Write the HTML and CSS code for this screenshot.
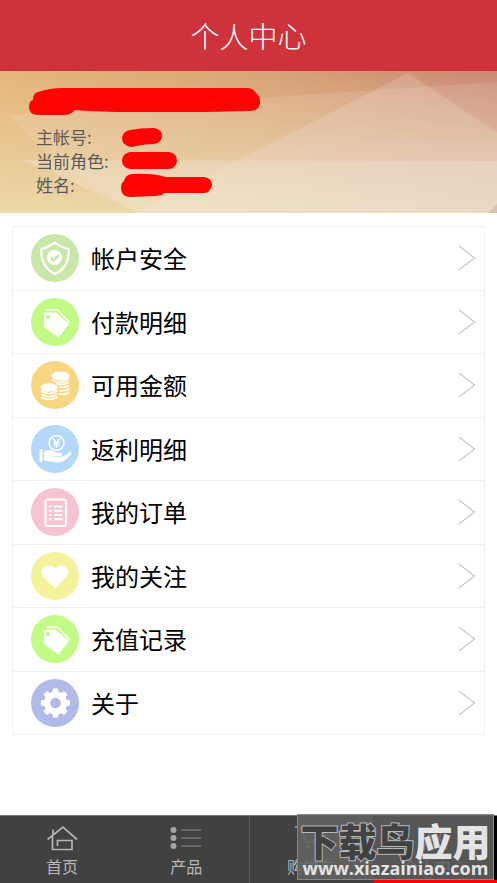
FILE: index.html
```html
<!DOCTYPE html>
<html lang="zh-CN">
<head>
<meta charset="utf-8">
<meta name="viewport" content="width=device-width, initial-scale=1">
<title>个人中心</title>
<link rel="stylesheet" href="styles.css">
</head>
<body>
<svg class="defs" aria-hidden="true">
  <symbol id="tag" viewBox="0 0 48 48">
    <path d="M14 14.500h9.500Q25 14.500 26 15.500L38 26 27.500 39.500 13 29V15.500Q13 14.500 14 14.500zM17 16.800a2.100 2.100 0 1 0 .1 0z" fill="#fff" fill-rule="evenodd"/>
    <path d="M15 12h11.500L38.500 24.500" fill="none" stroke="#fff" stroke-width="1.400"/>
  </symbol>
  <symbol id="arrow" viewBox="0 0 18 26"><path d="M1 1l15.500 12L1 25" fill="none" stroke="#c8c8c8" stroke-width="1.200"/></symbol>
</svg>
<header class="header"><h1>个人中心</h1></header>
<main class="main">
  <section class="banner">
    <svg class="facets" viewBox="0 0 497 142" preserveAspectRatio="none" aria-hidden="true">
      <defs>
        <linearGradient id="base" x1="0" y1="0" x2="1" y2="0"><stop offset="0" stop-color="#e6b57b"/><stop offset=".5" stop-color="#d9a476"/><stop offset="1" stop-color="#c98873"/></linearGradient>
        <linearGradient id="glow" x1="0" y1="0" x2="0" y2="1"><stop offset="0" stop-color="#ecdcac" stop-opacity="0"/><stop offset="1" stop-color="#ecdcac" stop-opacity=".9"/></linearGradient>
        <linearGradient id="side" x1="0" y1="0" x2="1" y2="0"><stop offset=".4" stop-color="#d9b5aa" stop-opacity="0"/><stop offset="1" stop-color="#d9b5aa" stop-opacity=".8"/></linearGradient>
      </defs>
      <path fill="url(#base)" d="M0 0h497v142H0z"/>
      <path fill="url(#glow)" d="M0 0h497v142H0z"/>
      <path fill="url(#side)" d="M0 70h497v72H0z" opacity=".5"/>
      <g fill="#f5ece6">
        <path d="M7 44L497 11v131H138L52 87z" opacity=".14"/>
        <path d="M408 2L135 142h362V61z" opacity=".2"/>
        <path d="M20 89l477 1v52H138L52 101z" opacity=".27"/>
      </g>
      <path d="M497 133l-9 9h9z" fill="#dbc1b2"/>
    </svg>
    <svg class="marks" viewBox="0 0 260 142" aria-hidden="true" fill="#ff0404">
      <path d="M38 21Q50 17 62 17H247Q253 17 256 22Q261 26 260 33Q258 40 250 40L205 41H135Q100 41 75 39Q71 44 64 44H37Q29 43 29 36Q29 30 33 29Q33 22 38 21z"/>
      <path d="M130 59Q140 57 154 57Q162 58 162 65Q161 73 153 73Q144 73 132 76Q122 75 122 67Q123 60 130 59z"/>
      <path d="M130 81H169Q177 82 177 90Q176 97 169 98H130Q122 97 122 89Q123 82 130 81z"/>
      <path d="M132 103Q152 102 166 106H204Q212 107 212 114Q211 121 204 122H165Q161 125 156 125L131 126Q121 126 121 117Q121 112 124 110Q125 104 132 103z"/>
    </svg>
    <dl class="info">
      <dt>主帐号:</dt>
      <dt>当前角色:</dt>
      <dt>姓名:</dt>
    </dl>
  </section>
  <nav class="list" aria-label="个人中心菜单">
    <a href="#"><svg class="icon" viewBox="0 0 48 48"><circle cx="24" cy="24" r="24" fill="#cae7aa"/><path d="M24 8.500q6 5 13.500 6.500C38.500 27 34 35 24 40 14 35 9.500 27 10.500 15 18 13.500 19 11 24 8.500z" fill="none" stroke="#fff" stroke-width="2.200"/><circle cx="23.500" cy="23.500" r="7.500" fill="#fff"/><path d="M19.500 23.500l3 3 5.500-5.500" fill="none" stroke="#cae7aa" stroke-width="2.500"/></svg><span>帐户安全</span><svg class="arrow"><use href="#arrow"/></svg></a>
    <a href="#"><svg class="icon" viewBox="0 0 48 48"><circle cx="24" cy="24" r="24" fill="#c1fa84"/><use href="#tag"/></svg><span>付款明细</span><svg class="arrow"><use href="#arrow"/></svg></a>
    <a href="#"><svg class="icon" viewBox="0 0 48 48"><circle cx="24" cy="24" r="24" fill="#f8d783"/><g fill="#fff"><ellipse cx="29.500" cy="15" rx="9" ry="4.500"/><ellipse cx="18" cy="26.500" rx="8.500" ry="4.200"/></g><g fill="none" stroke="#fff" stroke-width="1.600"><path d="M21 18.500q8 6.500 17-1M25 22.500q7 2.500 13-1.500M28 26q6 1 10-1.500M28 29.500q6 1 10-1.500M28 33q6 1 10-1.500M10 29.500q8 6 16.500 0M10 32.800q8 6 16.500 0M10 36q8 5 16.500 0"/></g></svg><span>可用金额</span><svg class="arrow"><use href="#arrow"/></svg></a>
    <a href="#"><svg class="icon" viewBox="0 0 48 48"><circle cx="24" cy="24" r="24" fill="#b3d8f8"/><path d="M8.500 24.500h3V37h-3zM13 26.500q7-3 12 1h5q3 2 0 3.500h-8q10 3 17-4.500 2.500 1 .5 3.500-7 8-14 7.500L13 35.500z" fill="#fff"/><circle cx="25.500" cy="18" r="7.500" fill="none" stroke="#fff" stroke-width="1.500"/><path d="M22 13.500l3.500 4.500 3.500-4.500M25.500 18v5M22.500 18h6M22.500 20.300h6" fill="none" stroke="#fff" stroke-width="1.300"/></svg><span>返利明细</span><svg class="arrow"><use href="#arrow"/></svg></a>
    <a href="#"><svg class="icon" viewBox="0 0 48 48"><circle cx="24" cy="24" r="24" fill="#f8c3d0"/><rect x="14.500" y="11.500" width="20.500" height="26.500" rx="2" fill="none" stroke="#fff" stroke-width="2.200"/><path d="M23 18.500h8.500M23 22.800h8.500M23 27h8.500M23 31.200h8.500M18 18.500h2.500M18 22.800h2.500M18 27h2.500M18 31.200h2.500" stroke="#fff" stroke-width="2.200"/></svg><span>我的订单</span><svg class="arrow"><use href="#arrow"/></svg></a>
    <a href="#"><svg class="icon" viewBox="0 0 48 48"><circle cx="24" cy="24" r="24" fill="#f4f29b"/><path d="M24 36.500L12.500 24.500Q9 20 12 16q5-5 10-1l2 2 2-2q5-4 10 1 3 4-.5 8.500z" fill="#fff"/></svg><span>我的关注</span><svg class="arrow"><use href="#arrow"/></svg></a>
    <a href="#"><svg class="icon" viewBox="0 0 48 48"><circle cx="24" cy="24" r="24" fill="#c1fa84"/><use href="#tag"/></svg><span>充值记录</span><svg class="arrow"><use href="#arrow"/></svg></a>
    <a href="#"><svg class="icon" viewBox="0 0 48 48"><circle cx="24" cy="24" r="24" fill="#b2bae8"/><g fill="#fff"><circle cx="24.500" cy="24" r="11.500"/><path d="M21.300 14l.7-4.500h5l.7 4.500v20l-.7 4.500h-5l-.7-4.500z"/><path d="M21.300 14l.7-4.500h5l.7 4.500v20l-.7 4.500h-5l-.7-4.500z" transform="rotate(45 24.500 24)"/><path d="M21.300 14l.7-4.500h5l.7 4.500v20l-.7 4.500h-5l-.7-4.500z" transform="rotate(90 24.500 24)"/><path d="M21.300 14l.7-4.500h5l.7 4.500v20l-.7 4.500h-5l-.7-4.500z" transform="rotate(135 24.500 24)"/></g><circle cx="24.500" cy="24" r="5.300" fill="#b2bae8"/></svg><span>关于</span><svg class="arrow"><use href="#arrow"/></svg></a>
  </nav>
</main>
<footer class="footer">
  <nav class="tabs" aria-label="主导航">
    <a href="#"><svg viewBox="0 0 32 26"><path d="M1.500 14.500L17 2l14 12.500M7 10V4.500M6.500 11v13.500h19.500v-9H11.500V21" fill="none" stroke="#b5b5b5" stroke-width="1.700"/></svg><span>首页</span></a>
    <a href="#"><svg viewBox="0 0 32 26"><g fill="#a5a5a5"><circle cx="3.500" cy="5" r="3"/><circle cx="3.500" cy="13" r="3"/><circle cx="3.500" cy="21" r="3"/></g><path d="M11 5h20M11 13h20M11 21h20" stroke="#8d8d8d" stroke-width="1.200"/></svg><span>产品</span></a>
    <a href="#"><svg viewBox="0 0 32 26"><path d="M0 2h5l6 15h15l4-11H7" fill="none" stroke="#aaa" stroke-width="1.700"/><circle cx="13" cy="22" r="2" fill="#aaa"/><circle cx="24" cy="22" r="2" fill="#aaa"/></svg><span>购物车</span></a>
    <a href="#" class="active"><svg viewBox="0 0 32 26"><circle cx="16" cy="8" r="6" fill="none" stroke="#ddd" stroke-width="2"/><path d="M5 25q0-11 11-11t11 11" fill="none" stroke="#ddd" stroke-width="2"/></svg><span>个人中心</span></a>
  </nav>
  <div class="watermark"><div class="brand"><span class="dark">下载鸟</span><span>应用</span></div><div class="url">www.xiazainiao.com</div></div>
</footer>
</body>
</html>
```
FILE: styles.css
```css
* { box-sizing: border-box; }
body {
  margin: 0;
  min-height: 100vh;
  display: flex;
  flex-direction: column;
  background: #fff;
  color: #000;
  font-family: "Noto Sans CJK SC", sans-serif;
}
a { color: inherit; text-decoration: none; }
.defs { position: absolute; width: 0; height: 0; }
.header {
  height: 71px;
  padding-bottom: 2px;
  display: flex;
  align-items: center;
  justify-content: center;
  background: #ce333b;
  color: #fff;
}
.header h1 { margin: 0; font-size: 29px; line-height: 40px; font-weight: 300; }
.main { flex: 1; display: flex; flex-direction: column; }
.banner { position: relative; padding: 54px 36px 16px; overflow: hidden; }
.facets { position: absolute; inset: 0; width: 100%; height: 100%; }
.marks { position: absolute; left: 0; top: 0; width: 260px; height: 142px; }
.info { position: relative; margin: 0; color: #5a5a5a; font-size: 17px; line-height: 24px; font-weight: 400; }
.list {
  flex: 1;
  display: flex;
  flex-direction: column;
  margin: 13px 12px 80px;
  border: 1px solid #f0f0f0;
}
.list a {
  flex: 1;
  display: flex;
  align-items: center;
  padding: 0 8px 0 18px;
  font-size: 24px;
  line-height: 36px;
}
.list a + a { border-top: 1px solid #f0f0f0; }
.list span { flex: 1; margin-left: 12px; }
.icon { width: 48px; height: 48px; }
.arrow { width: 18px; height: 26px; }
.footer { position: relative; }
.tabs {
  display: grid;
  grid-template-columns: repeat(4, 1fr);
  height: 68px;
  background: #414142;
  border-top: 1px solid #777;
}
.tabs a {
  display: flex;
  flex-direction: column;
  align-items: center;
  padding-top: 9px;
  color: #b8b8b8;
  font-size: 16px;
  line-height: 24px;
}
.tabs a:nth-child(3) { border-left: 1px solid #606060; }
.tabs .active { background: #000; border-bottom: 3px solid #f00; }
.tabs svg { width: 32px; height: 26px; margin-bottom: 3px; }
.watermark {
  position: absolute;
  right: 3px;
  bottom: 3px;
  width: 197px;
  height: 66px;
  padding-top: 7px;
  border: 1px solid #888;
  background: rgba(98, 98, 98, .88);
  color: #e4e4e4;
  text-align: center;
  white-space: nowrap;
}
.brand { font-size: 38px; line-height: 36px; font-weight: 900; }
.dark { color: #414142; paint-order: stroke; -webkit-text-stroke: 2px #b8b8b8; }
.url { font: bold 18px/20px "Open Sans", sans-serif; }
```
